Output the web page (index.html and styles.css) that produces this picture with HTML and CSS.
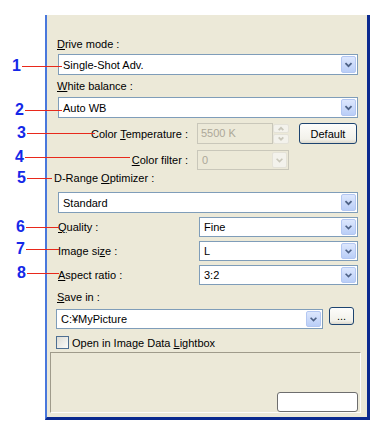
FILE: index.html
```html
<!DOCTYPE html>
<html lang="en">
<head>
    <meta charset="UTF-8">
    <title>Capture settings</title>
    <link rel="stylesheet" href="styles.css">
</head>
<body>

<div class="sheet">
    <div class="panel">
        <div class="label"><u>D</u>rive mode :</div>
        <div class="combo top-drive">
            <span class="value">Single-Shot Adv.</span>
            <span class="drop"><svg viewBox="0 0 15 17"><path d="M4 7 L7.5 10.5 L11 7"/></svg></span>
        </div>

        <div class="label top-wb"><u>W</u>hite balance :</div>
        <div class="combo top-wbcombo">
            <span class="value">Auto WB</span>
            <span class="drop"><svg viewBox="0 0 15 17"><path d="M4 7 L7.5 10.5 L11 7"/></svg></span>
        </div>

        <div class="row top-temp">
            <div class="rlabel">Color <u>T</u>emperature :</div>
            <div class="field off temp">5500 K</div>
            <div class="spin">
                <span><svg viewBox="0 0 15 8"><path d="M5 5.5 L7.5 3 L10 5.5"/></svg></span>
                <span><svg viewBox="0 0 15 8"><path d="M5 2.5 L7.5 5 L10 2.5"/></svg></span>
            </div>
            <button class="btn default">Default</button>
        </div>

        <div class="row top-filter">
            <div class="rlabel"><u>C</u>olor filter :</div>
            <div class="combo off filter">
                <span class="value">0</span>
                <span class="drop"><svg viewBox="0 0 15 17"><path d="M4 7 L7.5 10.5 L11 7"/></svg></span>
            </div>
        </div>

        <div class="label top-dro">D-Range <u>O</u>ptimizer :</div>
        <div class="combo top-std">
            <span class="value">Standard</span>
            <span class="drop"><svg viewBox="0 0 15 17"><path d="M4 7 L7.5 10.5 L11 7"/></svg></span>
        </div>

        <div class="row pair top-quality">
            <div class="plabel"><u>Q</u>uality :</div>
            <div class="combo short">
                <span class="value">Fine</span>
                <span class="drop"><svg viewBox="0 0 15 17"><path d="M4 7 L7.5 10.5 L11 7"/></svg></span>
            </div>
        </div>
        <div class="row pair top-pair">
            <div class="plabel">Image si<u>z</u>e :</div>
            <div class="combo short">
                <span class="value">L</span>
                <span class="drop"><svg viewBox="0 0 15 17"><path d="M4 7 L7.5 10.5 L11 7"/></svg></span>
            </div>
        </div>
        <div class="row pair top-pair">
            <div class="plabel"><u>A</u>spect ratio :</div>
            <div class="combo short">
                <span class="value">3:2</span>
                <span class="drop"><svg viewBox="0 0 15 17"><path d="M4 7 L7.5 10.5 L11 7"/></svg></span>
            </div>
        </div>

        <div class="label top-save"><u>S</u>ave in :</div>
        <div class="row saverow">
            <div class="combo save">
                <span class="value">C:¥MyPicture</span>
                <span class="drop"><svg viewBox="0 0 15 17"><path d="M4 7 L7.5 10.5 L11 7"/></svg></span>
            </div>
            <button class="btn browse">...</button>
        </div>

        <div class="check">
            <span class="box"></span>
            <span>Open in Image Data <u>L</u>ightbox</span>
        </div>

        <div class="group">
            <div class="blank"></div>
        </div>
    </div>

    <!-- numbered callouts -->
    <div class="callout n1"><b>1</b><i></i></div>
    <div class="callout n2"><b>2</b><i></i></div>
    <div class="callout n3"><b>3</b><i></i></div>
    <div class="callout n4"><b>4</b><i></i></div>
    <div class="callout n5"><b>5</b><i></i></div>
    <div class="callout n6"><b>6</b><i></i></div>
    <div class="callout n7"><b>7</b><i></i></div>
    <div class="callout n8"><b>8</b><i></i></div>
</div>

</body>
</html>
```

FILE: styles.css
```css
body {
    margin: 0;
    background: #fff;
    font-family: "Liberation Sans", Arial, sans-serif;
    font-size: 11px;
    color: #000;
}
.sheet {
    position: relative;
    width: 391px;
    height: 434px;
    padding-top: 15px;
    box-sizing: border-box;
}
.panel {
    margin-left: 45px;
    width: 300px;
    height: 379px;
    padding: 23px 9px 0 11px;
    background: #ece9d8;
    border-left: 2px solid #4a78dc;
    border-right: 3px solid #0b2a8f;
    border-bottom: 3px solid #0b2a8f;
}
.label {
    height: 13px;
    line-height: 13px;
    margin-left: -1px;
}
.top-wb { margin-top: 5px; }
.top-dro { margin-top: 2px; margin-left: -4px; }
.top-save { margin-top: 6px; }

/* combo boxes */
.combo {
    display: flex;
    align-items: center;
    height: 21px;
    box-sizing: border-box;
    border: 1px solid #7f9db9;
    background: #fff;
    padding: 1px;
}
.combo .value {
    flex: 1;
    padding-left: 3px;
    white-space: nowrap;
}
.drop {
    width: 15px;
    height: 100%;
    box-sizing: border-box;
    border: 1px solid #b3c7f2;
    border-radius: 2px;
    background: linear-gradient(180deg, #dde7fd, #bacef7);
    display: flex;
}
.drop svg {
    width: 100%;
    height: 100%;
}
.drop path, .spin path {
    fill: none;
    stroke: #4d6185;
    stroke-width: 2;
}
.top-drive { margin-top: 3px; }
.top-wbcombo { margin-top: 4px; }
.top-std { margin-top: 7px; }

.off {
    border-color: #c9c7ba;
    background: #ece9d8;
    color: #aca899;
}
.off .drop {
    background: #f3f2ec;
    border-color: #e4e2d8;
}
.off .drop path, .spin path {
    stroke: #c9c7ba;
}

/* rows */
.row {
    display: flex;
    align-items: center;
}
.top-temp { margin-top: 5px; height: 21px; }
.top-filter { margin-top: 6px; height: 20px; }
.rlabel {
    width: 130px;
    text-align: right;
    margin-right: 9px;
    white-space: nowrap;
}
.field {
    height: 21px;
    box-sizing: border-box;
    border: 1px solid #c9c7ba;
    line-height: 19px;
    padding-left: 3px;
}
.temp { width: 76px; }
.spin {
    width: 17px;
    height: 21px;
    display: flex;
    flex-direction: column;
    gap: 1px;
    padding: 1px 1px 1px 0;
    box-sizing: border-box;
}
.spin span {
    flex: 1;
    border: 1px solid #e4e2d8;
    background: #f3f2ec;
    border-radius: 2px;
    display: flex;
}
.spin svg {
    width: 100%;
    height: 100%;
}
.btn {
    font-family: inherit;
    font-size: 11px;
    color: #000;
    border: 1px solid #1d4470;
    border-radius: 3px;
    background: linear-gradient(180deg, #fdfdfb, #f2f1ea 80%, #dcd8cc);
    padding: 0;
}
.default {
    width: 58px;
    height: 21px;
    margin-left: 9px;
}
.filter {
    width: 92px;
    height: 20px;
}
.pair { height: 20px; }
.top-quality { margin-top: 4px; }
.top-pair { margin-top: 4px; }
.plabel {
    flex: 1;
    white-space: nowrap;
}
.short {
    width: 159px;
    height: 20px;
}

.saverow {
    margin-top: 3px;
    margin-left: -2px;
    align-items: flex-start;
    height: 22px;
}
.save {
    width: 267px;
    height: 20px;
    margin-top: 2px;
}
.browse {
    width: 25px;
    height: 18px;
    margin-left: 6px;
    line-height: 14px;
}

.check {
    display: flex;
    align-items: center;
    gap: 3px;
    margin-top: 7px;
    margin-left: -2px;
    height: 13px;
}
.box {
    width: 13px;
    height: 13px;
    box-sizing: border-box;
    border: 1px solid #4e6f92;
    background: linear-gradient(135deg, #dcdcd5, #fbfbf9);
}

.group {
    margin-top: 3px;
    margin-left: -8px;
    margin-right: -3px;
    height: 61px;
    box-sizing: border-box;
    border: 1px solid;
    border-color: #9f9b8b #fdfdfb #fdfdfb #9f9b8b;
    display: flex;
    justify-content: flex-end;
    align-items: flex-end;
    padding-right: 2px;
}
.blank {
    width: 81px;
    height: 20px;
    box-sizing: border-box;
    border: 1px solid #6e6e6e;
    border-radius: 3px;
    background: #fff;
}

/* callouts */
.callout {
    position: absolute;
    left: 15px;
    display: flex;
    align-items: center;
    height: 18px;
}
.callout b {
    font-size: 16px;
    line-height: 18px;
    color: #1428e8;
}
.callout i {
    display: block;
    height: 1px;
    margin-left: 1px;
    background: #e8291c;
}
.n1 { top: 57px; left: 12px; }
.n1 i { width: 40px; }
.n2 { top: 101px; }
.n2 i { width: 37px; }
.n3 { top: 124px; left: 17px; }
.n3 i { width: 68px; }
.n4 { top: 148px; }
.n4 i { width: 105px; }
.n5 { top: 169px; left: 17px; }
.n5 i { width: 25px; }
.n6 { top: 218px; left: 16px; }
.n6 i { width: 33px; }
.n7 { top: 240px; left: 16px; }
.n7 i { width: 33px; }
.n8 { top: 264px; left: 17px; }
.n8 i { width: 32px; }
```
